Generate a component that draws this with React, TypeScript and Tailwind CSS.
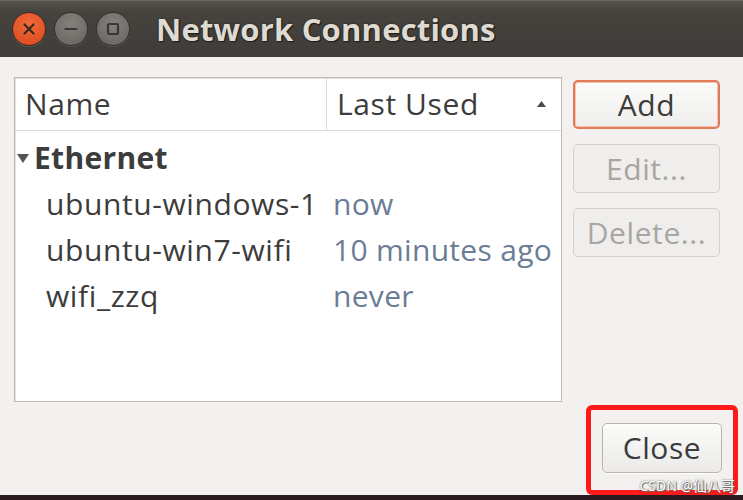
import React from "react";

const font = { fontFamily: '"Open Sans", "Noto Sans", sans-serif' };

function WinButton({ kind }: { kind: "close" | "min" | "max" }) {
  if (kind === "close") {
    return (
      <div className="w-[34px] h-[34px] rounded-full bg-[radial-gradient(circle_at_50%_35%,#f26b3a,#d9461c)] border border-[#3a2a22] flex items-center justify-center shadow-[0_1px_0_rgba(255,255,255,0.15)]">
        <svg width="16" height="16" viewBox="0 0 16 16">
          <path d="M3.5 3.5 L12.5 12.5 M12.5 3.5 L3.5 12.5" stroke="#3a2a22" strokeWidth="2.2" strokeLinecap="round" />
        </svg>
      </div>
    );
  }
  return (
    <div className="w-[34px] h-[34px] rounded-full bg-[radial-gradient(circle_at_50%_35%,#85827d,#66635e)] border border-[#33312d] flex items-center justify-center shadow-[0_1px_0_rgba(255,255,255,0.12)]">
      {kind === "min" ? (
        <svg width="16" height="16" viewBox="0 0 16 16">
          <path d="M2.5 8 L13.5 8" stroke="#3a3834" strokeWidth="2.2" strokeLinecap="round" />
        </svg>
      ) : (
        <svg width="16" height="16" viewBox="0 0 16 16">
          <rect x="3" y="3" width="10" height="10" rx="1" fill="none" stroke="#3a3834" strokeWidth="2.2" />
        </svg>
      )}
    </div>
  );
}

const rows = [
  { name: "ubuntu-windows-1", used: "now" },
  { name: "ubuntu-win7-wifi", used: "10 minutes ago" },
  { name: "wifi_zzq", used: "never" },
];

export default function App() {
  return (
    <div className="relative w-[743px] h-[500px] overflow-hidden bg-[#f2f1f0] flex flex-col" style={font}>
      {/* Title bar */}
      <div className="h-[57px] shrink-0 bg-[linear-gradient(#55524c,#46433e_20%,#3f3d39)] border-t border-[#6a6660] flex items-center pl-[12px]">
        <div className="flex items-center gap-[8px]">
          <WinButton kind="close" />
          <WinButton kind="min" />
          <WinButton kind="max" />
        </div>
        <div className="ml-[26px] text-[31px] leading-none font-bold tracking-[0.2px] text-[#dfdbd2] [text-shadow:1px_1px_1px_#1e1c19,0_0_2px_#1e1c19]">
          Network Connections
        </div>
      </div>

      {/* Body */}
      <div className="flex-1 flex flex-col pl-[14px] pt-[20px] text-[30px] leading-none tracking-[0.6px]">
        <div className="flex gap-[11px]">
          {/* Tree view */}
          <div className="w-[548px] h-[325px] bg-white border border-[#bdb9b4] shadow-[inset_1px_1px_0_#e4e2df]">
            <div className="h-[53px] flex border-b border-[#dedbd7] text-[#3c3c3c]">
              <div className="w-[312px] border-r border-[#dedbd7] flex items-center pl-[10px]">Name</div>
              <div className="flex-1 flex items-center pl-[10px] pr-[15px] justify-between">
                <span>Last Used</span>
                <svg width="9" height="6" viewBox="0 0 9 6">
                  <path d="M4.5 0 L9 6 L0 6 Z" fill="#4a4a4a" />
                </svg>
              </div>
            </div>
            <div className="pt-[4px]">
              <div className="h-[46px] flex items-center text-[#3c3c3c]">
                <svg width="12" height="9" viewBox="0 0 12 9" className="ml-[2px] mr-[5px]">
                  <path d="M0 0 L12 0 L6 9 Z" fill="#555" />
                </svg>
                <span className="font-bold tracking-[0.3px]">Ethernet</span>
              </div>
              {rows.map((r) => (
                <div key={r.name} className="h-[46px] flex items-center">
                  <div className="w-[318px] pl-[31px] text-[#3c3c3c] whitespace-nowrap">{r.name}</div>
                  <div className="text-[#6b7d94] whitespace-nowrap tracking-[0.3px]">{r.used}</div>
                </div>
              ))}
            </div>
          </div>

          {/* Button column */}
          <div className="w-[147px] pt-[3px] flex flex-col gap-[15px]">
            <div className="h-[49px] rounded-[5px] border-2 border-[#e07a5a] bg-[linear-gradient(#fbfbfa,#efeeed)] shadow-[inset_0_0_0_1px_#f6c3b3] flex items-center justify-center text-[#3c3c3c]">
              Add
            </div>
            <div className="h-[49px] rounded-[5px] border border-[#d3d0cc] bg-[#efeeed] flex items-center justify-center text-[#a9a6a1]">
              Edit...
            </div>
            <div className="h-[49px] rounded-[5px] border border-[#d3d0cc] bg-[#efeeed] flex items-center justify-center text-[#a9a6a1]">
              Delete...
            </div>
          </div>
        </div>

        {/* Close region */}
        <div className="self-end mr-[5px] mt-[3px] w-[152px] h-[90px] border-[5px] border-[#ff1a1a] rounded-[6px] pl-[11px] pt-[13px]">
          <div className="w-[120px] h-[50px] rounded-[5px] border border-[#b8b5b1] bg-[linear-gradient(#fbfbfa,#ebeae8)] shadow-[0_1px_0_#ffffff] flex items-center justify-center text-[#3c3c3c]">
            Close
          </div>
        </div>
      </div>

      <div className="h-[5px] shrink-0 bg-[#2a1c20]" />

      <div
        className="absolute right-[8px] bottom-[7px] text-[14px] leading-none text-white [text-shadow:0_0_2px_#555,1px_1px_1px_#666]"
        style={{ fontFamily: '"Noto Sans", "Noto Sans CJK SC", sans-serif' }}
      >
        CSDN @仙八哥
      </div>
    </div>
  );
}
